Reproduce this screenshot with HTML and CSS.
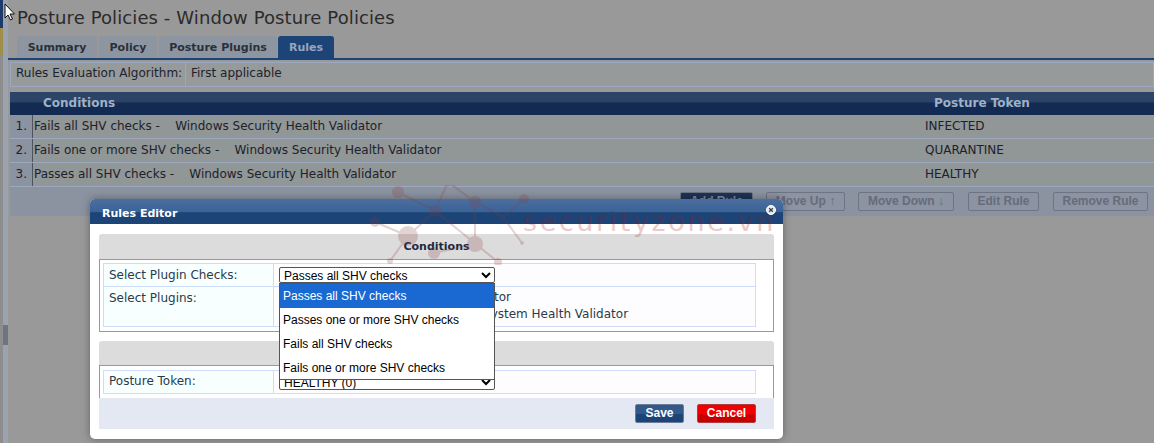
FILE: index.html
```html
<!DOCTYPE html>
<html lang="en">
<head>
  <meta charset="UTF-8">
  <title>Posture Policies - Window Posture Policies</title>
  <link rel="stylesheet" href="styles.css">
</head>
<body>
  <!-- Page behind the dialog, already dimmed -->
  <div class="page">
    <div class="side-strip"></div>
    <div class="content">
      <h1 class="title">Posture Policies - Window Posture Policies</h1>
      <div class="tabs">
        <div class="tab tab-summary">Summary</div>
        <div class="tab tab-policy">Policy</div>
        <div class="tab tab-plugins">Posture Plugins</div>
        <div class="tab tab-active">Rules</div>
      </div>
      <div class="algo">
        <div class="algo-label">Rules Evaluation Algorithm:</div>
        <div class="algo-value">First applicable</div>
      </div>
      <div class="rules-head">
        <div class="head-cond">Conditions</div>
        <div class="head-token">Posture Token</div>
      </div>
      <div class="rule-row">
        <div class="rule-num">1.</div>
        <div class="rule-cond">Fails all SHV checks - &nbsp; &nbsp;Windows Security Health Validator</div>
        <div class="rule-token">INFECTED</div>
      </div>
      <div class="rule-row">
        <div class="rule-num">2.</div>
        <div class="rule-cond">Fails one or more SHV checks - &nbsp; &nbsp;Windows Security Health Validator</div>
        <div class="rule-token">QUARANTINE</div>
      </div>
      <div class="rule-row">
        <div class="rule-num">3.</div>
        <div class="rule-cond">Passes all SHV checks - &nbsp; &nbsp;Windows Security Health Validator</div>
        <div class="rule-token">HEALTHY</div>
      </div>
      <div class="rule-actions">
        <div class="btn-page btn-add">Add Rule</div>
        <div class="btn-page btn-up">Move Up ↑</div>
        <div class="btn-page btn-down">Move Down ↓</div>
        <div class="btn-page btn-edit">Edit Rule</div>
        <div class="btn-page btn-remove">Remove Rule</div>
      </div>
    </div>
  </div>

  <!-- Rules Editor dialog -->
  <div class="modal">
    <div class="modal-head">
      <span>Rules Editor</span>
      <svg class="modal-close" width="10" height="10" viewBox="0 0 10 10">
        <circle cx="5" cy="5" r="4.500" fill="#e8e8e8" stroke="#ffffff"/>
        <path d="M3.200 3.200l3.600 3.600M6.800 3.200l-3.600 3.600" stroke="#33415c" stroke-width="1.300"/>
      </svg>
    </div>
    <div class="modal-body">
      <div class="modal-scroll">
        <div class="section-head">Conditions</div>
        <div class="section-box">
          <div class="form-row">
            <div class="form-label">Select Plugin Checks:</div>
            <div class="form-value">
              <select class="form-select">
                <option>Passes all SHV checks</option>
              </select>
            </div>
          </div>
          <div class="form-row form-row-tall">
            <div class="form-label">Select Plugins:</div>
            <div class="form-value plugin-list">
              <div>Windows Security Health Validator</div>
              <div>ClearPass Windows Universal System Health Validator</div>
            </div>
          </div>
        </div>
        <div class="section-head section-head-2">Actions</div>
        <div class="section-box section-box-2">
          <div class="form-row">
            <div class="form-label">Posture Token:</div>
            <div class="form-value">
              <select class="form-select">
                <option>HEALTHY (0)</option>
              </select>
            </div>
          </div>
        </div>
      </div>
      <div class="modal-foot">
        <div class="btn-save">Save</div>
        <div class="btn-cancel">Cancel</div>
      </div>
    </div>
  </div>

  <!-- Watermark over the screen -->
  <div class="watermark">
    <svg class="wm-graph" width="170" height="80" viewBox="365 185 170 80">
      <g stroke="#8a3a3a" stroke-width="2" fill="none">
        <path d="M398 192L435 211L448 182L475 202L503 217L524 199M503 217L522 243M475 202V244M435 211L498 262M435 211L408 236L375 222M408 236L390 261M434 253L475 244"/>
      </g>
      <g fill="#8a3a3a">
        <circle cx="398" cy="192" r="6"/>
        <circle cx="448" cy="182" r="4"/>
        <circle cx="475" cy="202" r="6"/>
        <circle cx="524" cy="199" r="5"/>
        <circle cx="435" cy="211" r="6"/>
        <circle cx="375" cy="222" r="5"/>
        <circle cx="408" cy="236" r="10"/>
        <circle cx="475" cy="244" r="8"/>
        <circle cx="434" cy="253" r="6"/>
        <circle cx="390" cy="261" r="3"/>
        <circle cx="498" cy="262" r="4"/>
        <circle cx="522" cy="243" r="2"/>
      </g>
    </svg>
    <div class="wm-text">securityzone.vn</div>
  </div>

  <!-- Open dropdown list -->
  <div class="dropdown">
    <div class="dropdown-item dropdown-item-on">Passes all SHV checks</div>
    <div class="dropdown-item">Passes one or more SHV checks</div>
    <div class="dropdown-item">Fails all SHV checks</div>
    <div class="dropdown-item">Fails one or more SHV checks</div>
  </div>

  <svg class="cursor" width="16" height="20" viewBox="0 0 16 20">
    <path d="M5 2v14l3-3 2.500 5 2-1-2.500-5h4.500z" fill="#ffffff" stroke="#111111" stroke-width="1"/>
  </svg>
</body>
</html>
```

FILE: styles.css
```css
html, body {
  margin: 0; padding: 0;
  height: 100%; overflow: hidden;
  background: #999999; color: #1c222c;
  font-family: "DejaVu Sans", Verdana, sans-serif;
  font-size: 12px;
}
/* the thin strip at the far left is what shows of the window behind */
.page {
  display: flex; height: 443px;
  background: linear-gradient(to bottom, #1d3a6a 0, #1d3a6a 28px, #a08f4a 28px, #a08f4a 55px, #8d8d8d 55px) no-repeat;
  background-size: 3px 100%;
}
.side-strip { margin-left: 3px; width: 5px; flex: none; background: linear-gradient(to bottom, #9ba3b0 0, #9ba3b0 325px, #6f7480 325px, #6f7480 345px, #9ba3b0 345px); }
.content { flex: 1; padding: 0 0 0 2px; min-width: 0; }
.title {
  margin: 0; padding: 7px 0 0 7px; height: 29px; box-sizing: border-box;
  font-size: 18px; font-weight: normal; line-height: 22px; letter-spacing: .1px; color: #2b2b2b;
}
/* Tabs */
.tabs { display: flex; gap: 2px; padding-left: 9px; margin: 7px 0 0 -2px; height: 22px; border-bottom: 2px solid #1d4477; }
.tab {
  box-sizing: border-box; height: 22px; line-height: 23px; text-align: center;
  font-weight: bold; font-size: 11px; color: #2a303a;
  background: #8d96a0; border-radius: 3px 3px 0 0;
}
.tab-summary { width: 80px; }
.tab-policy { width: 58px; }
.tab-plugins { width: 118px; }
.tab-active { width: 56px; margin-left: -1px; background: #1d4477; color: #96a6bd; }
/* Algorithm */
.algo {
  display: flex; height: 25px; margin-top: 2px; box-sizing: border-box;
  border: 1px solid #9ca8bf; background: #969a9a; line-height: 21px;
}
.algo-label { width: 175px; padding-left: 5px; box-sizing: border-box; border-right: 1px solid #9ca8bf; }
.algo-value { padding-left: 5px; }
/* Rules table */
.rules-head {
  display: flex; height: 23px; margin-top: 5px; line-height: 22px;
  font-weight: bold; font-size: 12px; color: #9fb0c7;
  background: linear-gradient(to bottom, #2c4468 0%, #2c4468 40%, #132b52 50%, #132b52 100%);
}
.head-cond { width: 924px; padding-left: 33px; box-sizing: border-box; }
.rule-row { display: flex; height: 24px; background: #919696; line-height: 22px; box-sizing: border-box; border-bottom: 1px solid #9ca8bf; }
.rule-row:last-of-type { height: 23px; }
.rule-num { width: 23px; text-align: right; box-sizing: border-box; padding-right: 5px; background: #8b92a0; border-right: 1px solid #4e5560; }
.rule-cond { width: 892px; box-sizing: border-box; white-space: nowrap; padding-left: 1px; }
.rule-actions {
  display: flex; justify-content: flex-end; gap: 13px; height: 29px; box-sizing: border-box;
  padding: 5px 6px 0 0; background: #8b93a1;
}
.btn-page {
  box-sizing: border-box; height: 19px; line-height: 16px; text-align: center;
  border: 1px solid #6d7482; border-radius: 2px; background: #8c93a2;
  font-family: "Liberation Sans", Arial, sans-serif; font-weight: bold; color: #666c78;
}
.btn-add { width: 73px; background: #1f3358; color: #7d8ba3; }
.btn-up { width: 79px; }
.btn-down { width: 96px; }
.btn-edit { width: 71px; margin-left: 1px; }
.btn-remove { width: 95px; margin-left: 1px; }
/* Dialog */
.modal {
  position: absolute; left: 90px; top: 199px; width: 693px; height: 240px;
  display: flex; flex-direction: column;
  background: #ffffff; border-radius: 5px;
  box-shadow: 0 0 8px rgba(0,0,0,.35);
}
.modal-head {
  display: flex; align-items: center; justify-content: space-between;
  height: 25px; padding: 0 7px 0 12px; flex: none;
  border-radius: 5px 5px 0 0;
  font-weight: bold; font-size: 11px; color: #ffffff;
  background: linear-gradient(to bottom, #4a6f9f 0%, #3c6397 50%, #1d4477 55%, #1d4477 100%);
}
.modal-head span { margin-top: 3px; }
.modal-close { margin-top: -3px; }
.modal-body { padding: 10px 9px 10px; flex: 1; display: flex; flex-direction: column; min-height: 0; }
.modal-scroll { height: 164px; overflow: hidden; flex: none; }
.section-head {
  height: 25px; background: #dcdcdc; border-radius: 3px 3px 0 0;
  text-align: center; font-weight: bold; font-size: 11px; line-height: 25px; color: #1c2a44;
}
.section-head-2 { margin-top: 9px; height: 24px; }
.section-box { box-sizing: border-box; border: 1px solid #999999; padding: 3px 17px 4px 3px; }
.section-box-2 { padding-top: 4px; }
.form-row { display: flex; height: 24px; box-sizing: border-box; border: 1px solid #cddcf8; }
.form-row-tall { height: 40px; border-top: 0; }
.form-label { width: 170px; box-sizing: border-box; padding: 4px 0 0 5px; background: #f7ffff; border-right: 1px solid #cddcf8; color: #2a3a4a; }
.section-box-2 .form-label { padding-top: 3px; }
.form-value { flex: 1; padding: 3px 0 0 5px; background: #fdfdff; min-width: 0; }
.plugin-list { padding: 2px 0 0 30px; line-height: 17px; color: #2a3a4a; }
.form-select {
  display: block; width: 216px; height: 16px; margin: 0; padding: 0;
  border: 1px solid #555555; border-radius: 2px; background: #ffffff;
  font-family: "Liberation Sans", Arial, sans-serif; font-size: 12px; color: #000000;
}
.modal-foot {
  display: flex; justify-content: flex-end; gap: 13px; height: 31px; flex: none;
  box-sizing: border-box; padding: 6px 18px 0 0; background: #e3e8f3;
}
.btn-save, .btn-cancel {
  box-sizing: border-box; height: 19px; line-height: 17px; text-align: center; border-radius: 2px;
  font-family: "Liberation Sans", Arial, sans-serif; font-weight: bold; font-size: 12px; color: #ffffff;
}
.btn-save { width: 49px; border: 1px solid #6b7d96; background: linear-gradient(to bottom, #33598b 0%, #33598b 50%, #1d4477 55%); }
.btn-cancel { width: 59px; border: 1px solid #b04040; background: linear-gradient(to bottom, #f00000 0%, #f00000 50%, #c80000 60%); }
/* Watermark */
.watermark { position: absolute; left: 365px; top: 170px; width: 440px; height: 100px; pointer-events: none; opacity: .22; }
.wm-graph { position: absolute; left: 0; top: 15px; }
.wm-text {
  position: absolute; left: 158px; top: 36px;
  font-size: 27px; letter-spacing: 2.6px; color: #b01010; white-space: nowrap;
}
/* Open list */
.dropdown {
  position: absolute; left: 279px; top: 283px; width: 216px; height: 97px; box-sizing: border-box;
  border: 1px solid #555555; background: #ffffff;
  font-family: "Liberation Sans", Arial, sans-serif; font-size: 12px; color: #000000;
}
.dropdown-item { height: 24px; line-height: 24px; padding-left: 3px; }
.dropdown-item-on { background: #1a69d3; color: #ffffff; }
.cursor { position: absolute; left: 0; top: 2px; }
```
